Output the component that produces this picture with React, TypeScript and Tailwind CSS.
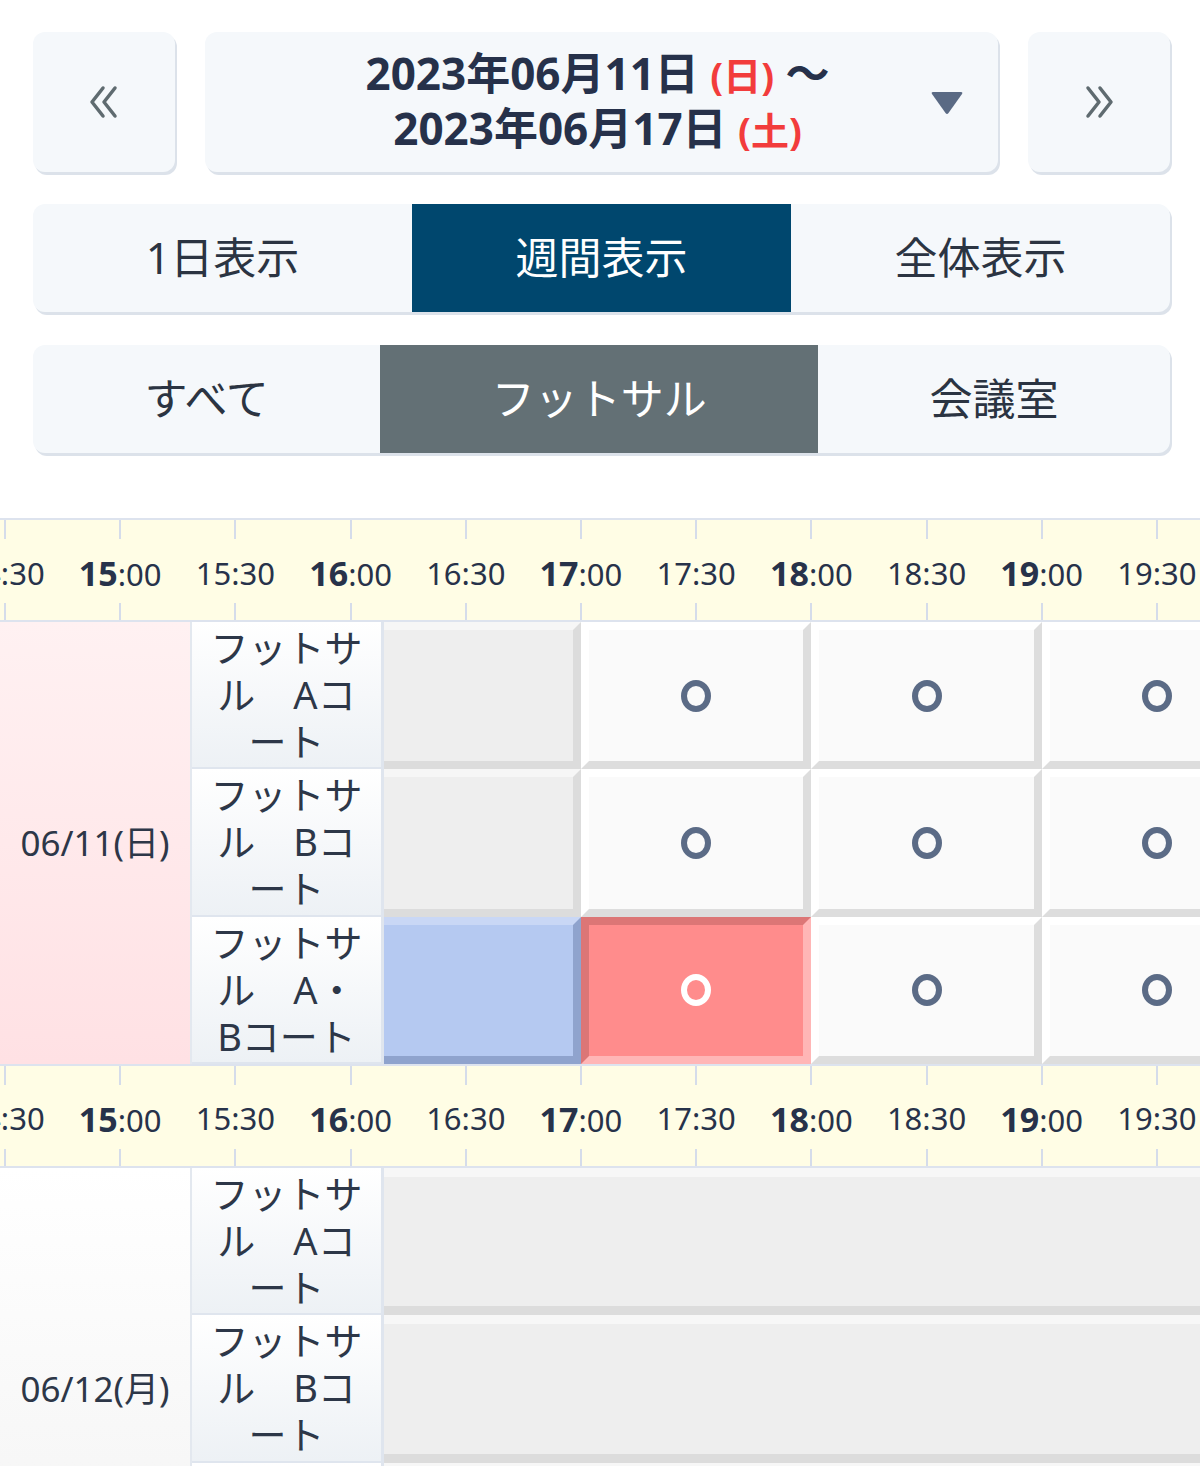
import React from "react";

type SlotKind = "closed" | "open" | "mine" | "selected" | "band";

type ResourceRow = {
  name: string[];
  slots: SlotKind[];
};

type Day = {
  date: string;
  holiday: boolean;
  rows: ResourceRow[];
};

const TIMES = [
  "14:30", "15:00", "15:30", "16:00", "16:30", "17:00",
  "17:30", "18:00", "18:30", "19:00", "19:30", "20:00",
];

const DAYS: Day[] = [
  {
    date: "06/11(日)",
    holiday: true,
    rows: [
      { name: ["フットサ", "ル　Aコ", "ート"], slots: ["closed", "open", "open", "open"] },
      { name: ["フットサ", "ル　Bコ", "ート"], slots: ["closed", "open", "open", "open"] },
      { name: ["フットサ", "ル　A・", "Bコート"], slots: ["mine", "selected", "open", "open"] },
    ],
  },
  {
    date: "06/12(月)",
    holiday: false,
    rows: [
      { name: ["フットサ", "ル　Aコ", "ート"], slots: ["band"] },
      { name: ["フットサ", "ル　Bコ", "ート"], slots: ["band"] },
      { name: ["フットサ", "ル　A・", "Bコート"], slots: ["band"] },
    ],
  },
];

function Chevrons({ dir }: { dir: "left" | "right" }) {
  const paths =
    dir === "left"
      ? ["M15 3 L4 17 L15 31", "M27 3 L16 17 L27 31"]
      : ["M5 3 L16 17 L5 31", "M17 3 L28 17 L17 31"];
  return (
    <svg width="32" height="34" viewBox="0 0 32 34" fill="none" stroke="#5f6b70" strokeWidth="3.5" strokeLinecap="round" strokeLinejoin="round">
      {paths.map((d) => (
        <path key={d} d={d} />
      ))}
    </svg>
  );
}

function Ring({ white }: { white?: boolean }) {
  return (
    <svg width="30" height="32" viewBox="0 0 30 32" fill="none">
      <ellipse cx="15" cy="16" rx="12" ry="13" stroke={white ? "#ffffff" : "#5b6b86"} strokeWidth="6" />
    </svg>
  );
}

function NavBar() {
  return (
    <div className="flex h-[140px] gap-[30px]">
      <button className="flex w-[142px] shrink-0 items-center justify-center rounded-xl bg-[#f5f8fb] shadow-[2px_3px_0_0_#dce2ea]">
        <Chevrons dir="left" />
      </button>
      <button className="flex flex-1 items-center rounded-xl bg-[#f5f8fb] shadow-[2px_3px_0_0_#dce2ea]">
        <div className="flex-1" />
        <div className="ml-[26px] text-center text-[44px] font-bold leading-[53px] text-[#26314a]">
          <div>
            2023年06月11日 <span className="text-[38px] text-[#f23c3c]">(日)</span> 〜
          </div>
          <div>
            2023年06月17日 <span className="text-[38px] text-[#f23c3c]">(土)</span>
          </div>
        </div>
        <div className="flex flex-1 justify-end pr-[34px]">
          <svg width="34" height="25" viewBox="0 0 34 25">
            <path d="M3 2 H31 Q33 2 32 4 L18.5 23 Q17 25 15.5 23 L2 4 Q1 2 3 2 Z" fill="#5a6a84" />
          </svg>
        </div>
      </button>
      <button className="flex w-[142px] shrink-0 items-center justify-center rounded-xl bg-[#f5f8fb] shadow-[2px_3px_0_0_#dce2ea]">
        <Chevrons dir="right" />
      </button>
    </div>
  );
}

function ViewTabs() {
  const tabs = ["1日表示", "週間表示", "全体表示"];
  return (
    <div className="mt-8 grid h-[108px] grid-cols-3 overflow-hidden rounded-xl bg-[#f5f8fb] shadow-[2px_3px_0_0_#dce2ea]">
      {tabs.map((t, i) => (
        <div
          key={t}
          className={
            i === 1
              ? "flex items-center justify-center bg-[#00476e] text-[43px] text-white"
              : "flex items-center justify-center text-[43px] text-[#2b3442]"
          }
        >
          {t}
        </div>
      ))}
    </div>
  );
}

function CategoryTabs() {
  const tabs = ["すべて", "フットサル", "会議室"];
  return (
    <div className="mt-[33px] flex h-[108px] overflow-hidden rounded-xl bg-[#f5f8fb] shadow-[2px_3px_0_0_#dce2ea]">
      {tabs.map((t, i) => (
        <div
          key={t}
          className={
            i === 1
              ? "flex flex-auto items-center justify-center bg-[#637075] text-[43px] text-white"
              : "flex flex-auto items-center justify-center text-[43px] text-[#2b3442]"
          }
        >
          {t}
        </div>
      ))}
    </div>
  );
}

function TimeHeader() {
  return (
    <div className="h-[104px] overflow-hidden border-y-2 border-[#dde3ee] bg-[#fffde5]">
      <div className="ml-[-52.6px] flex h-full">
        {TIMES.map((t) => {
          const [h, m] = t.split(":");
          return (
            <div key={t} className="flex h-full w-[115.2px] shrink-0 flex-col items-center justify-between">
              <div className="h-[19px] w-[2px] bg-[#d5dcea]" />
              <div className="whitespace-nowrap pt-1 leading-none text-[#27324a]">
                {m === "00" ? (
                  <>
                    <span className="text-[34px] font-bold">{h}</span>
                    <span className="text-[31px]">:{m}</span>
                  </>
                ) : (
                  <span className="text-[31px]">{t}</span>
                )}
              </div>
              <div className="h-[17px] w-[2px] bg-[#d5dcea]" />
            </div>
          );
        })}
      </div>
    </div>
  );
}

const SLOT_STYLE: Record<SlotKind, string> = {
  closed: "border-8 border-l-0 border-t-[#f6f6f6] border-r-[#dcdcdc] border-b-[#dcdcdc] bg-[#eeeeee]",
  open: "border-8 border-t-white border-l-white border-r-[#dddddd] border-b-[#dddddd] bg-[#fafafa]",
  mine: "border-8 border-l-0 border-t-[#c9d7f5] border-r-[#8fa3cd] border-b-[#8fa3cd] bg-[#b5c9f1]",
  selected: "border-8 border-t-[#dc7676] border-l-[#dc7676] border-r-[#ffb6b6] border-b-[#ffb6b6] bg-[#ff8c8c]",
  band: "border-y-[9px] border-t-[#f7f7f7] border-b-[#dcdcdc] bg-[#eeeeee]",
};

function SlotCell({ kind, index }: { kind: SlotKind; index: number }) {
  const width = kind === "band" ? "flex-1" : index === 0 ? "w-[197px] shrink-0" : "w-[230.4px] shrink-0";
  return (
    <div className={`flex h-full items-center justify-center ${width} ${SLOT_STYLE[kind]}`}>
      {kind === "open" && <Ring />}
      {kind === "selected" && <Ring white />}
    </div>
  );
}

function DayBlock({ day }: { day: Day }) {
  return (
    <div className="flex">
      <div
        className={
          day.holiday
            ? "flex w-[192px] shrink-0 items-center justify-center border-r-2 border-[#e3e8ef] bg-linear-to-b from-[#fff1f2] to-[#ffe1e4] text-[35px] text-[#2d3748]"
            : "flex w-[192px] shrink-0 items-center justify-center border-r-2 border-[#e3e8ef] bg-linear-to-b from-white to-[#f3f3f3] text-[35px] text-[#2d3748]"
        }
      >
        {day.date}
      </div>
      <div className="flex min-w-0 flex-1 flex-col">
        {day.rows.map((row, r) => (
          <div key={r} className="flex h-[147.33px]">
            <div className="flex w-[192px] shrink-0 flex-col items-center justify-center border-r-[3px] border-b-2 border-[#dfe5ee] bg-linear-to-b from-white to-[#edf1f5] text-center text-[38px] leading-[47px] text-[#2d3748]">
              {row.name.map((line) => (
                <div key={line} className="whitespace-pre">
                  {line}
                </div>
              ))}
            </div>
            <div className="flex min-w-0 flex-1 overflow-hidden">
              {row.slots.map((s, i) => (
                <SlotCell key={i} kind={s} index={i} />
              ))}
            </div>
          </div>
        ))}
      </div>
    </div>
  );
}

export default function App() {
  return (
    <div className="h-[1466px] w-[1200px] overflow-hidden bg-white font-['Noto_Sans','Noto_Sans_CJK_JP',sans-serif]">
      <div className="pl-[33px] pr-[30px] pt-8">
        <NavBar />
        <ViewTabs />
        <CategoryTabs />
      </div>
      <div className="mt-[65px]">
        {DAYS.map((day) => (
          <div key={day.date}>
            <TimeHeader />
            <DayBlock day={day} />
          </div>
        ))}
      </div>
    </div>
  );
}
